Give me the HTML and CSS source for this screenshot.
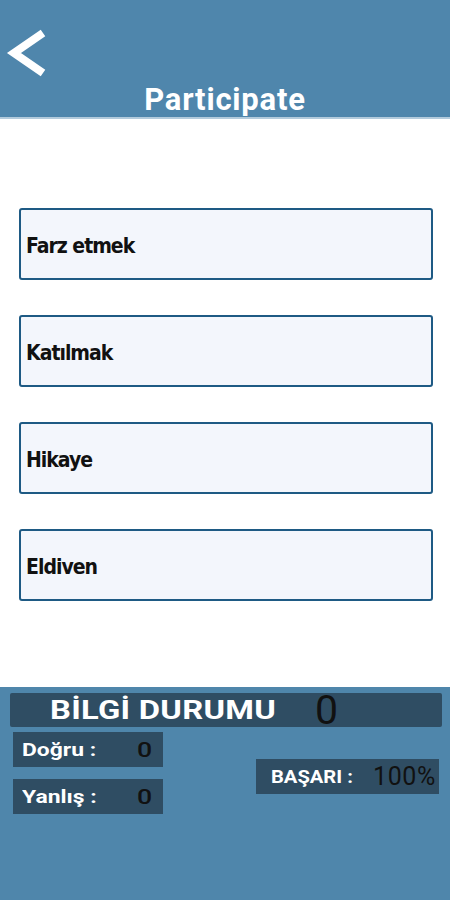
FILE: index.html
```html
<!DOCTYPE html>
<html lang="tr">
<head>
<meta charset="utf-8">
<title>Participate</title>
<link rel="stylesheet" href="styles.css">
</head>
<body>
<div class="app">
  <header class="topbar">
    <div class="back">
      <svg width="44" height="50" viewBox="0 0 44 50" aria-hidden="true">
        <polyline points="37,4 8,24 37,44" fill="none" stroke="#ffffff" stroke-width="8" stroke-linejoin="miter" stroke-linecap="butt"/>
      </svg>
    </div>
    <h1 class="title">Participate</h1>
  </header>
  <main class="choices">
    <button class="choice">Farz etmek</button>
    <button class="choice">Katılmak</button>
    <button class="choice">Hikaye</button>
    <button class="choice">Eldiven</button>
  </main>
  <section class="stats">
    <div class="stat-head">
      <span class="head-label"><span class="wide-text">BİLGİ DURUMU</span></span>
      <span class="head-value">0</span>
    </div>
    <div class="stat-grid">
      <div class="stat-col">
        <div class="stat-box small"><span class="lbl"><span class="wide-text">Doğru :</span></span><span class="val"><span class="wide-text">0</span></span></div>
        <div class="stat-box small"><span class="lbl"><span class="wide-text">Yanlış :</span></span><span class="val"><span class="wide-text">0</span></span></div>
      </div>
      <div class="stat-box wide"><span class="lbl"><span class="wide-text">BAŞARI :</span></span><span class="val pct">100%</span></div>
    </div>
  </section>
</div>
</body>
</html>
```
FILE: styles.css
```css
* { box-sizing: border-box; }
html, body { margin: 0; padding: 0; }
body {
  width: 450px;
  height: 900px;
  overflow: hidden;
  font-family: Roboto, "Liberation Sans", sans-serif;
  background: #ffffff;
}
.app {
  display: flex;
  flex-direction: column;
  height: 900px;
}
.topbar {
  height: 119px;
  background: #4f86ac;
  border-bottom: 2px solid #b3cbdc;
  position: relative;
  display: flex;
  flex-direction: column;
  align-items: center;
}
.back {
  position: absolute;
  left: 6px;
  top: 29px;
}
.back svg { display: block; }
.title {
  margin: 82px 0 0 0;
  font-size: 31px;
  font-weight: 700;
  color: #ffffff;
  line-height: 36px;
  letter-spacing: 0.8px;
}
.choices {
  height: 568px;
  display: flex;
  flex-direction: column;
  gap: 35px;
  padding: 89px 17px 0 19px;
}
.choice {
  height: 72px;
  width: 414px;
  background: #f3f6fc;
  border: 2px solid #1e5a84;
  border-radius: 3px;
  text-align: left;
  padding: 4px 0 0 5px;
  margin: 0;
  font-family: "DejaVu Sans Condensed", "DejaVu Sans", sans-serif;
  font-stretch: condensed;
  font-weight: 700;
  font-size: 21px;
  color: #111111;
  letter-spacing: -1px;
}
.stats {
  flex: 1;
  background: #4f86ab;
  padding: 6px 8px 0 10px;
}
.stat-head {
  height: 34px;
  width: 432px;
  background: #2f4d63;
  border-radius: 2px;
  display: flex;
  align-items: center;
  padding-left: 40px;
}
.wide-text {
  display: inline-block;
  transform: scaleX(1.27);
  transform-origin: left center;
  white-space: nowrap;
}
.head-label {
  color: #ffffff;
  font-weight: 700;
  font-size: 25px;
  width: 265px;
  letter-spacing: 0.2px;
}
.head-label .wide-text {
  transform: scaleX(1.31);
}
.head-value {
  color: #111111;
  font-weight: 400;
  font-size: 41px;
  line-height: 34px;
}
.stat-grid {
  display: grid;
  grid-template-columns: 150px 183px;
  column-gap: 93px;
  margin-top: 5px;
  padding-left: 3px;
}
.stat-col {
  display: flex;
  flex-direction: column;
  gap: 12px;
}
.stat-box {
  height: 35px;
  background: #2f4d63;
  display: flex;
  align-items: center;
}
.stat-box.small {
  padding-left: 9px;
}
.stat-box.small .lbl {
  width: 115px;
}
.stat-box.wide {
  align-self: center;
  margin-top: 6px;
  padding-left: 15px;
}
.stat-box.wide .lbl {
  width: 102px;
}
.stat-box.wide .wide-text {
  transform: scaleX(1.12);
}
.lbl {
  color: #ffffff;
  font-weight: 700;
  font-size: 18px;
}
.val {
  color: #111111;
  font-size: 21px;
  font-weight: 500;
}
.val.pct {
  font-size: 25px;
  font-weight: 400;
  letter-spacing: 0.6px;
}
```
